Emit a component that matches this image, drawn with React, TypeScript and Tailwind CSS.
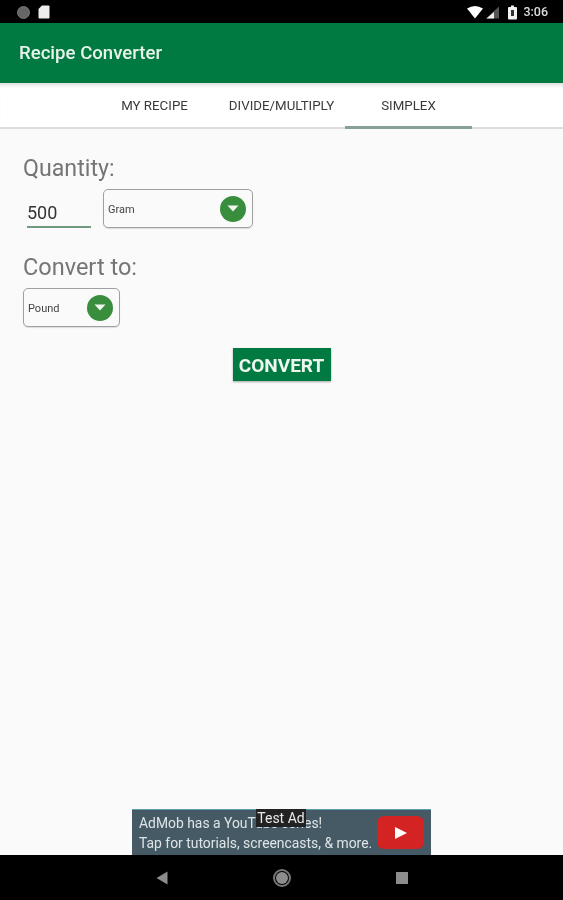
import { ReactNode } from "react";

function Spinner({ label, className }: { label: string; className: string }) {
  return (
    <div
      className={`flex h-[39px] items-center justify-between rounded-[5px] border border-[#a0a0a0] pl-1 pr-[6px] shadow-[0_1px_1px_#0000001f] ${className}`}
    >
      <span className="pt-[3px] text-[11px] text-[#444444]">{label}</span>
      <span className="flex size-[26px] items-center justify-center rounded-full bg-[#388e3c]">
        <svg width="12" height="7" viewBox="0 0 12 7">
          <path d="M0.5 0.5h11L6 6.5z" fill="#f2f7f2" />
        </svg>
      </span>
    </div>
  );
}

function Tab({ children, active }: { children: ReactNode; active?: boolean }) {
  return (
    <div
      className={`flex h-[46px] w-[127px] items-center justify-center border-b-[3px] pt-[2px] text-[13.3px] text-[#3a3a3a] ${
        active ? "border-[#87a096]" : "border-transparent"
      }`}
    >
      {children}
    </div>
  );
}

export default function App() {
  return (
    <div className="flex h-[900px] w-[563px] flex-col overflow-hidden bg-[#fafafa] font-['Roboto',sans-serif] blur-[0.4px]">
      <div className="flex h-[23px] items-center justify-between bg-black pl-[17px] pr-[15px] pt-[1px]">
        <div className="flex items-center gap-[8px]">
          <span className="size-[13px] rounded-full border border-[#777777] bg-[#666666]" />
          <svg width="12" height="14" viewBox="0 0 12 14">
            <path d="M4 0.5h6.5a1 1 0 0 1 1 1v11a1 1 0 0 1-1 1h-9a1 1 0 0 1-1-1V4z" fill="#eeeeee" />
          </svg>
        </div>
        <div className="flex items-center">
          <svg width="16" height="13" viewBox="0 0 16 13">
            <path d="M0 2.5Q8-2.5 16 2.5L8 12.5z" fill="#ffffff" />
          </svg>
          <svg className="ml-[3px]" width="13" height="13" viewBox="0 0 13 13">
            <path d="M13 0.5V12.5H0z" fill="#555555" />
            <path d="M8 6V12.5H0.5z" fill="#eeeeee" />
          </svg>
          <svg className="ml-[9px]" width="9" height="15" viewBox="0 0 9 15">
            <path d="M3 0.5h3v1.5h2a1 1 0 0 1 1 1v10.5a1 1 0 0 1-1 1H1a1 1 0 0 1-1-1V3a1 1 0 0 1 1-1h2z" fill="#f2f2f2" />
            <rect x="3" y="5" width="3" height="6" fill="#333333" />
          </svg>
          <span className="ml-[6px] text-[12.5px] font-medium text-[#dddddd]">3:06</span>
        </div>
      </div>

      <header className="flex h-[60px] items-center bg-[#007a41] pl-[19px] pt-[2px] text-[18.6px] font-medium text-[#e8f3ec]">
        Recipe Converter
      </header>

      <nav className="flex justify-center border-b-[2px] border-[#dddddd] bg-white shadow-[inset_0_5px_4px_-3px_#00000026]">
        <div className="-mb-[2px] flex">
          <Tab>MY RECIPE</Tab>
          <Tab>DIVIDE/MULTIPLY</Tab>
          <Tab active>SIMPLEX</Tab>
        </div>
      </nav>

      <main className="flex flex-1 flex-col pl-[23px] pt-[24px]">
        <p className="text-[23.2px] leading-[30px] text-[#757575]">Quantity:</p>
        <div className="mt-[6px] flex items-start gap-[11px]">
          <div className="mt-[2px] h-[37px] w-[69px] pl-[5px] pr-[1px]">
            <div className="-ml-[1px] h-[37px] border-b-[2px] border-[#6f9a80] pt-[10px] text-[18px] leading-[24px] text-[#333333]">
              500
            </div>
          </div>
          <Spinner label="Gram" className="w-[150px]" />
        </div>
        <p className="mt-[24px] text-[23.5px] leading-[30px] text-[#757575]">Convert to:</p>
        <div className="mt-[6px] flex">
          <Spinner label="Pound" className="w-[97px]" />
        </div>
        <div className="mt-[21px] flex justify-center pr-[23px]">
          <div className="flex h-[33px] w-[98px] items-center justify-center bg-[#007a41] pt-[3px] text-[19px] font-bold text-[#eef6f0] shadow-[0_1px_2px_#00000059]">
            CONVERT
          </div>
        </div>
      </main>

      <div className="flex justify-center">
        <div className="relative flex h-[46px] w-[299px] items-center justify-between border-t border-[#5f9ea8] bg-[#455a64] pl-[7px] pr-[7px]">
          <div className="text-[13.9px] leading-[20px] whitespace-nowrap text-[#dfe5e7]">
            <p>AdMob has a YouTube series!</p>
            <p>Tap for tutorials, screencasts, &amp; more.</p>
          </div>
          <div className="flex h-[33px] w-[47px] shrink-0 items-center justify-center rounded-[7px] bg-[#d32323]">
            <svg width="14" height="14" viewBox="0 0 14 14">
              <path d="M1 1L13 7L1 13z" fill="#ffffff" />
            </svg>
          </div>
          <div className="absolute left-[124px] -top-[1px] flex h-[18px] w-[50px] items-center justify-center bg-[#222222] text-[14px] text-[#e8e8e8]">
            Test Ad
          </div>
        </div>
      </div>

      <div className="flex h-[45px] items-center justify-center bg-black">
        <div className="flex w-[252px] items-center justify-between">
          <svg width="12" height="14" viewBox="0 0 12 14">
            <path d="M11.5 0.5V13.5L0.5 7z" fill="#8c8c8c" />
          </svg>
          <span className="flex size-[18px] items-center justify-center rounded-full border-[2px] border-[#777777]">
            <span className="size-[12px] rounded-full bg-[#8c8c8c]" />
          </span>
          <span className="size-[12px] bg-[#8c8c8c]" />
        </div>
      </div>
    </div>
  );
}
